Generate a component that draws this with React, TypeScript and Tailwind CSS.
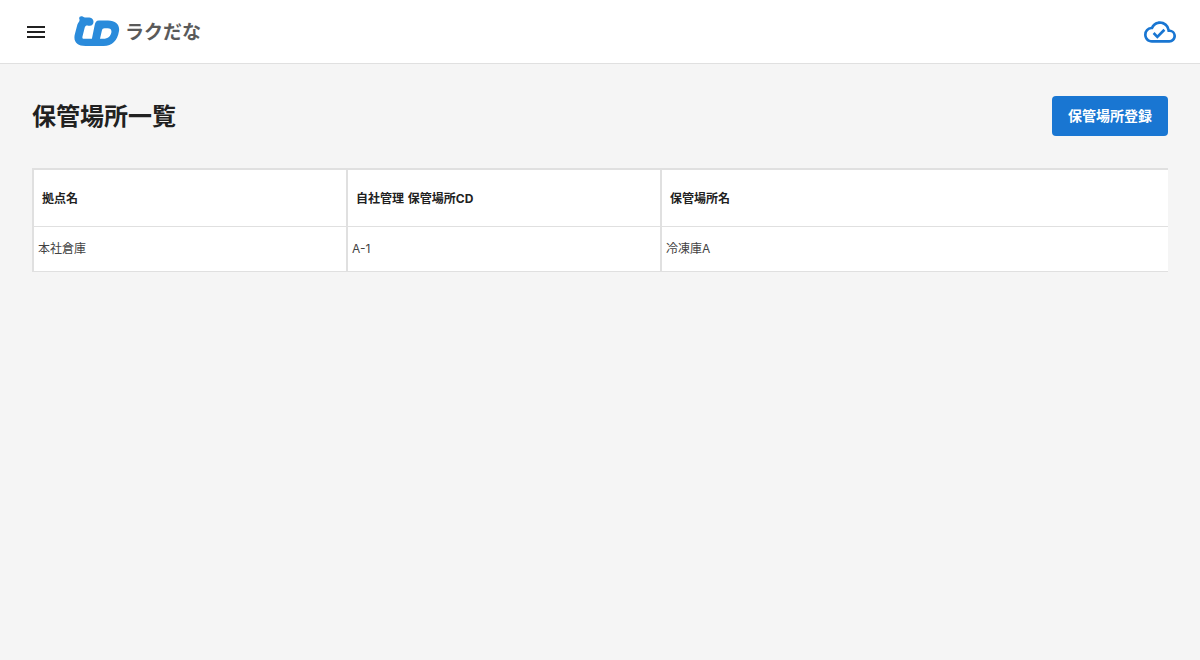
import { ReactNode } from 'react'
import { MdMenu, MdOutlineCloudDone } from 'react-icons/md'

type StorageLocation = {
  baseName: string
  code: string
  name: string
}

const locations: StorageLocation[] = [
  { baseName: '本社倉庫', code: 'A-1', name: '冷凍庫A' },
]

const Logo = () => (
  <div className="ml-[26px] flex h-8 items-start">
    <svg width="46" height="32" viewBox="0 0 46 32" fill="none">
      <path
        fill="#2a8bdb"
        fillRule="evenodd"
        d="M5.4 3.2C4.6 1.4 6 -0.1 7.8 0.2C9.4 0.4 9.8 1.4 10.8 1.4H15.4C20.8 1.6 20.8 9.6 15.8 9.8C14 9.8 13.4 9.2 12.4 9.6C11.2 10.2 10.8 11.4 10.5 12.6L8.6 20C8.1 21.9 8.4 22.8 9.8 22.8H17.9L20.6 9.6C21.3 6 22.2 4.4 25 4.4H34C42.2 4.4 46.2 9 44.9 15.6C43.4 24.6 38.4 30 29.6 30H11.6C2.8 30 -1 25.6 0.9 18L3.4 8.6C3.9 6.8 6.2 5.2 5.4 3.2ZM30.6 12.2C29 12.2 28.3 13 27.9 14.6L26 22.8H29.2C34 22.8 36.9 19.8 37.4 16.2C37.7 13.4 36.4 12.2 33.6 12.2Z"
      />
    </svg>
    <span className="ml-[5px] text-[19px] leading-[34px] font-bold text-[#5a5a5a]">
      ラクだな
    </span>
  </div>
)

const HeadCell = ({ children }: { children: ReactNode }) => (
  <th className="border-l-2 border-b border-[#e0e0e0] px-2 pt-0.5 text-left font-bold text-[#212121] [word-spacing:1px]">
    {children}
  </th>
)

const Cell = ({ children }: { children: ReactNode }) => (
  <td className="border-l-2 border-b border-[#e0e0e0] px-1 text-[#424242]">
    {children}
  </td>
)

const App = () => {
  return (
    <div className="min-h-screen bg-[#f5f5f5] font-['Inter','Noto_Sans_CJK_JP',sans-serif] text-[#212121]">
      <header className="flex h-16 items-center border-b border-[#e0e0e0] bg-white px-6">
        <button type="button">
          <MdMenu size={24} />
        </button>
        <Logo />
        <MdOutlineCloudDone size={32} className="ml-auto text-[#1976d2]" />
      </header>
      <main className="p-8">
        <div className="flex h-10 items-center justify-between">
          <h1 className="pt-0.5 text-2xl font-bold">保管場所一覧</h1>
          <button
            type="button"
            className="h-10 rounded bg-[#1976d2] px-4 text-sm font-bold text-white"
          >
            保管場所登録
          </button>
        </div>
        <div className="mt-8 overflow-hidden">
          <table className="w-[1256px] table-fixed border-separate border-spacing-0 border-t-2 border-[#e0e0e0] bg-white text-xs">
            <colgroup>
              <col className="w-[314px]" />
              <col className="w-[314px]" />
              <col />
            </colgroup>
            <thead>
              <tr className="h-[57px]">
                <HeadCell>拠点名</HeadCell>
                <HeadCell>自社管理 保管場所CD</HeadCell>
                <HeadCell>保管場所名</HeadCell>
              </tr>
            </thead>
            <tbody>
              {locations.map((location) => (
                <tr key={location.code} className="h-[45px]">
                  <Cell>{location.baseName}</Cell>
                  <Cell>{location.code}</Cell>
                  <Cell>{location.name}</Cell>
                </tr>
              ))}
            </tbody>
          </table>
        </div>
      </main>
    </div>
  )
}

export default App
